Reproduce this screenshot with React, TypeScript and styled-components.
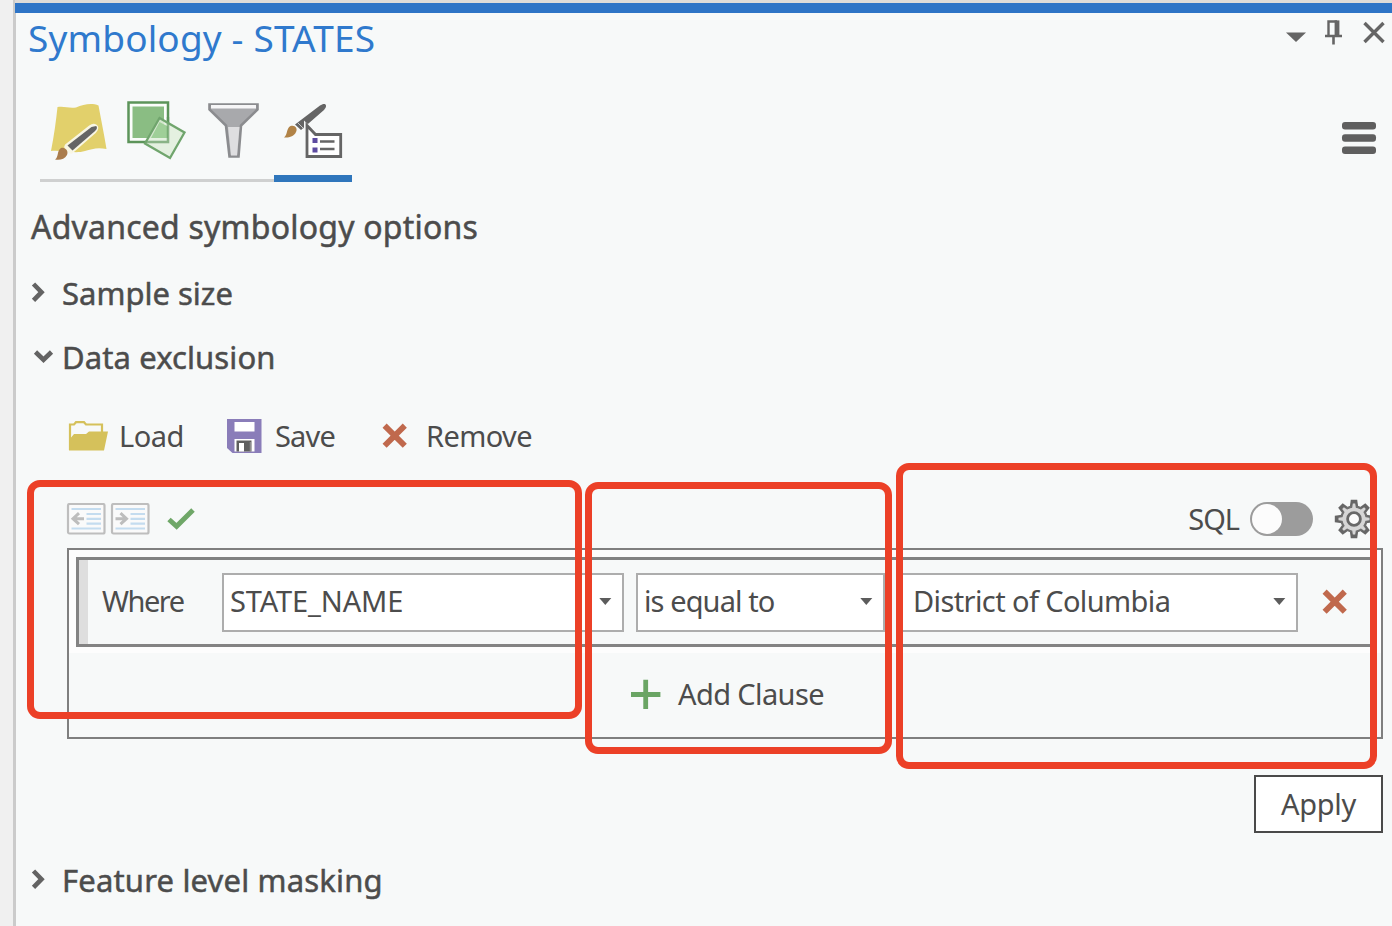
import React from 'react';
import styled, { createGlobalStyle } from 'styled-components';

const GlobalStyle = createGlobalStyle`
  * { box-sizing: border-box; }
  body { margin: 0; background: #f0f0f0; overflow: hidden; }
  svg { display: block; flex: none; }
`;

const Window = styled.div`
  width: 1392px;
  height: 926px;
  padding-left: 13px;
  background: #f0f0f0;
  font-family: 'Noto Sans', 'Open Sans', sans-serif;
  color: #4c4c4c;
  position: relative;
  overflow: hidden;
`;

const Pane = styled.section`
  height: 926px;
  border-left: 3px solid #cbcbcb;
  background: #f7f9f9;
  display: flex;
  flex-direction: column;
`;

const AccentStrip = styled.div`
  height: 13px;
  flex: none;
  margin-left: -1px;
  border-top: 3px solid #dedbd8;
  background: #2e74c6;
`;

const Label = styled.span<{ $spacing?: number }>`
  font-size: 29px;
  line-height: 40px;
  white-space: pre;
  letter-spacing: ${(p) => p.$spacing ?? 0}px;
`;

const TitleBar = styled.header`
  height: 52px;
  display: flex;
  justify-content: space-between;
  padding: 0 7px 0 12px;
`;

const Title = styled.h1`
  margin: 0;
  font-size: 37px;
  font-weight: 400;
  line-height: 50px;
  letter-spacing: 0.15px;
  color: #2f79cd;
  white-space: pre;
`;

const WindowControls = styled.div`
  display: flex;
  align-items: flex-start;
  padding-top: 5px;
`;

const TabBar = styled.nav`
  height: 118px;
  display: flex;
  justify-content: space-between;
  align-items: flex-end;
  padding: 0 15px 1px 24px;
`;

const Tabs = styled.div`
  display: flex;
`;

const Tab = styled.div<{ $active?: boolean }>`
  width: 78px;
  height: 86px;
  padding-top: 3px;
  border-bottom: ${(p) => (p.$active ? '7px solid #2f76bc' : '3px solid #cfd0d0')};
`;

const MenuButton = styled.div`
  height: 60px;
`;

const Heading = styled.h2`
  margin: 12px 0 0 15px;
  font-size: 32px;
  font-weight: 400;
  line-height: 64px;
  letter-spacing: 0.22px;
  -webkit-text-stroke: 0.5px #4c4c4c;
`;

const SectionHeader = styled.div<{ $height: number }>`
  height: ${(p) => p.$height}px;
  flex: none;
  display: flex;
  align-items: center;
  padding-left: 14px;
`;

const SectionTitle = styled.h3<{ $spacing: number }>`
  margin: 0 0 0 -1px;
  font-size: 31px;
  font-weight: 400;
  line-height: 42px;
  letter-spacing: ${(p) => p.$spacing}px;
  -webkit-text-stroke: 0.5px #4c4c4c;
`;

const Toolbar = styled.div`
  height: 101px;
  flex: none;
  display: flex;
  align-items: center;
  padding: 0 0 3px 52px;
`;

const ToolButton = styled.div<{ $width: number; $gap: number }>`
  width: ${(p) => p.$width}px;
  display: flex;
  align-items: center;
  gap: ${(p) => p.$gap}px;
`;

const BuilderTools = styled.div`
  height: 60px;
  flex: none;
  display: flex;
  align-items: center;
  padding: 2px 18px 0 50px;
`;

const CheckButton = styled.div`
  padding-left: 13px;
`;

const Spacer = styled.div`
  flex: 1;
`;

const Toggle = styled.div`
  width: 63px;
  height: 34px;
  margin: 0 21px 0 11px;
  padding: 2px;
  border-radius: 17px;
  background: #9c9c9c;
`;

const Knob = styled.div`
  width: 30px;
  height: 30px;
  border-radius: 50%;
  background: #fcfcfc;
`;

const QueryBox = styled.div`
  height: 191px;
  flex: none;
  margin: 0 9px 0 51px;
  border: 2px solid #7f7f7f;
  display: flex;
  flex-direction: column;
`;

const ClauseFrame = styled.div`
  height: 103px;
  padding: 7px 7px 6px;
  background: #fdfdfd;
`;

const Clause = styled.div`
  height: 90px;
  display: flex;
  align-items: center;
  border: 3px solid #838383;
  border-right-width: 2px;
  background: #f7f9f9;
`;

const Grip = styled.div`
  width: 9px;
  height: 100%;
  background: #dedede;
`;

const WhereCell = styled.div`
  width: 134px;
  flex: none;
  padding: 0 0 2px 14px;
`;

const Combo = styled.div<{ $width: number; $after: number }>`
  width: ${(p) => p.$width}px;
  flex: none;
  height: 59px;
  margin-right: ${(p) => p.$after}px;
  padding: 0 10px 2px 6px;
  border: 2px solid #adadad;
  background: #fff;
  display: flex;
  align-items: center;
  justify-content: space-between;
`;

const AddClause = styled.div`
  flex: 1;
  display: flex;
  align-items: center;
  gap: 17px;
  padding: 0 0 2px 562px;
`;

const Footer = styled.div`
  height: 109px;
  flex: none;
  display: flex;
  justify-content: flex-end;
  padding: 36px 9px 0 0;
`;

const ApplyButton = styled.div`
  width: 129px;
  height: 58px;
  border: 2px solid #4a4a4a;
  background: #fff;
  display: flex;
  align-items: center;
  justify-content: center;
`;

/* Annotation frames drawn over the pane. */
const Highlight = styled.div<{ $x: number; $y: number; $w: number; $h: number }>`
  position: absolute;
  left: ${(p) => p.$x}px;
  top: ${(p) => p.$y}px;
  width: ${(p) => p.$w}px;
  height: ${(p) => p.$h}px;
  border: 7px solid #ec4027;
  border-radius: 13px;
`;

const Chevron = ({ open }: { open?: boolean }) => (
  <svg width="33" height="32" viewBox="0 0 33 32" fill="none" stroke="#636363" strokeWidth="4.6">
    {open ? <path d="M5.5 11 13.5 18.7 21.5 11" /> : <path d="M3.5 7 11.5 15.2 3.5 23.4" />}
  </svg>
);

const Caret = () => (
  <svg width="13" height="8" viewBox="0 0 13 8">
    <path d="M0.3 1H12.3L6.3 8Z" fill="#5c5c5c" />
  </svg>
);

const Cross = () => (
  <svg width="26" height="26" viewBox="0 0 26 26" stroke="#c0694d" strokeWidth="5.8">
    <path d="M2.600 2.600 22.800 22.800M22.800 2.600 2.600 22.800" />
  </svg>
);

const ControlIcons = () => (
  <svg width="100" height="30" viewBox="1285 18 100 30" fill="none" stroke="#656565">
    <path d="M1286 32.5H1306L1296 42Z" fill="#656565" stroke="none" />
    <path d="M1328.5 36V21.5H1337" strokeWidth="2.4" />
    <path d="M1337 20.4V36" strokeWidth="4.8" />
    <path d="M1325 36H1342M1333.5 36V44.5" strokeWidth="2.6" />
    <path d="M1364.5 23 1383.500 42M1383.500 23 1364.500 42" strokeWidth="3.4" />
  </svg>
);

const MapBrushIcon = () => (
  <svg width="78" height="76" viewBox="40 98 78 76">
    <path d="M57.500 106C65 105 68 107.500 76 106.500C84 103 92 102 98.500 104.500C101 118 104 133 106.500 148C97 146 92 148 85 150C75 153 63 149 51 150C54 135 56 120 57.500 106Z" fill="#e2d06b" />
    <path d="M95.500 124.500C98.500 126.500 96.500 129 94.500 131.500L72 151C70 153 64 147 66 144.500L90 125.500C92 124 94 123.500 95.500 124.500Z" fill="#f8f6e4" stroke="#f8f6e4" strokeWidth="2.500" />
    <path d="M96.200 125C98 127 96 129.200 94.500 130.500L72.500 149.500L67.500 144.500L91.500 126Z" fill="#656565" />
    <path d="M61 147C65 145.500 69 150 67 154C64.500 158.500 59.500 159.500 55 158.500C59 156 56.500 150 61 147Z" fill="#aa7c4c" />
  </svg>
);

const LayersIcon = () => (
  <svg width="78" height="76" viewBox="118 98 78 76">
    <rect x="128.500" y="101.500" width="39.500" height="39.500" fill="#fbfdfb" stroke="#5c945a" strokeWidth="2.500" />
    <rect x="132.500" y="105.500" width="31.500" height="31.500" fill="#8abd83" />
    <path d="M159.500 117 184.500 131.500 170 157 145 142.500Z" fill="#e0efdc" fillOpacity=".85" />
    <path d="M159.500 121 168 125.500V137H151Z" fill="#9fcf98" />
    <path d="M168 116V141H145" fill="none" stroke="#5c945a" strokeWidth="2.500" opacity=".6" />
    <path d="M159.500 117 184.500 131.500 170 157 145 142.500Z" fill="none" stroke="#70a56d" strokeWidth="2.300" />
  </svg>
);

const FunnelIcon = () => (
  <svg width="78" height="76" viewBox="196 98 78 76">
    <path d="M209.500 103.500H257.500V108.500L241 124.500L238.500 155.500H229.500L226 124.500L209.500 108.500Z" fill="#a8a9ac" stroke="#8b8c8f" strokeWidth="2.600" />
    <path d="M228 126H239.500L237 154.500H231Z" fill="#dedee0" />
    <path d="M211 105.800H256" stroke="#f6f6f7" strokeWidth="3.400" />
  </svg>
);

const LegendBrushIcon = () => (
  <svg width="78" height="76" viewBox="274 98 78 76">
    <path d="M325.500 103.500C327 105.500 325 107.500 324 109L301 129L295 123.500L320 104.500C322 103.500 324 102.500 325.500 103.500Z" fill="#656565" />
    <path d="M297 121 303.500 127.500" stroke="#c9caca" strokeWidth="1" />
    <path d="M290.500 125C295 123.500 298 127.500 296 131C294 135.500 289 137 284 136.500C288 133.500 286 127.500 290.500 125Z" fill="#b18347" />
    <path d="M304 119.500 315.500 130.500H344V158.500H304Z" fill="#f7f9f9" />
    <path d="M307 124.500 315.500 133.500H340.700V155.500H307Z" fill="#fff" stroke="#656565" strokeWidth="2.800" />
    <path d="M312.500 137h5v5h-5zM312.500 146.500h5v5h-5z" fill="#5d4ba0" />
    <path d="M320 140.500H334.500M320 148H334.500" stroke="#656565" strokeWidth="2.500" />
  </svg>
);

const BurgerIcon = () => (
  <svg width="36" height="34" viewBox="0 0 36 34" fill="#5f5f5f">
    <rect x="1" y="0" width="34" height="7.500" rx="3" />
    <rect x="1" y="12.300" width="34" height="7.500" rx="3" />
    <rect x="1" y="24.500" width="34" height="7.500" rx="3" />
  </svg>
);

const FolderIcon = () => (
  <svg width="40" height="32" viewBox="0 0 40 32">
    <path d="M2 30V4.500H6L8 2.200H16L18 4.500H34V13" fill="none" stroke="#d5c15b" strokeWidth="2.200" />
    <path d="M1 30.500V20L6 14H18L21 11.500H40L36 30.500Z" fill="#d5c15b" />
  </svg>
);

const FloppyIcon = () => (
  <svg width="36" height="34" viewBox="0 0 36 34">
    <path d="M1 0H35.500V34H6.500L1 29Z" fill="#8a7db9" />
    <rect x="8.500" y="3" width="20" height="9.500" fill="#fff" />
    <rect x="8.500" y="20" width="20" height="12.500" fill="#fff" />
    <path d="M10.500 21.500H25.500V32.500H10.500Z" fill="#5e5e5e" />
    <path d="M13 24H18V32.500H13Z" fill="#fff" />
    <path d="M24.300 23V32.500" stroke="#999" strokeWidth="1" />
  </svg>
);

const IndentIcon = ({ right }: { right?: boolean }) => (
  <svg width="44" height="32" viewBox="0 0 44 32" fill="none">
    <rect x="2" y="1" width="36.500" height="29.500" rx="1.500" fill="#fafafa" stroke="#bebebe" strokeWidth="2.200" />
    <path d="M5.500 6H35M20.500 11H35M20.500 15.800H35M20.500 20.600H35M5.500 25.500H35" stroke="#c4dcef" strokeWidth="2.200" />
    <path d={right ? 'M5.500 15.700H16M10.500 10.200 16.500 15.700 10.500 21.200' : 'M7 15.700H18M13 10.200 7 15.700 13 21.200'} stroke="#bdbdbd" strokeWidth="3" />
  </svg>
);

const CheckIcon = () => (
  <svg width="28" height="24" viewBox="0 0 28 24" fill="none" stroke="#6fa768" strokeWidth="5">
    <path d="M2 12.500 9.600 19.300 26 3" />
  </svg>
);

const teeth = [0, 45, 90, 135, 180, 225, 270, 315];
const GearIcon = () => (
  <svg width="40" height="40" viewBox="-20 -20 40 40">
    {teeth.map((a) => (
      <path key={a} transform={`rotate(${a})`} d="M-4.200 -12 -3.200 -19.200H3.200L4.200 -12Z" fill="#666" />
    ))}
    <circle r="12.600" fill="#d6d6d6" stroke="#707070" strokeWidth="2.200" />
    {teeth.map((a) => (
      <path key={a} transform={`rotate(${a})`} d="M-2 -10 -1.200 -15.500H1.200L2 -10Z" fill="#d6d6d6" />
    ))}
    <circle r="6.400" fill="#fbfbfb" stroke="#686868" strokeWidth="2.800" />
  </svg>
);

const PlusIcon = () => (
  <svg width="30" height="30" viewBox="0 0 30 30" stroke="#6aa564" strokeWidth="4.800">
    <path d="M0 15.500H29.400M14.700 0.800V30" />
  </svg>
);

export default function App() {
  return (
    <Window>
      <GlobalStyle />
      <Pane>
        <AccentStrip />
        <TitleBar>
          <Title>Symbology - STATES</Title>
          <WindowControls><ControlIcons /></WindowControls>
        </TitleBar>
        <TabBar>
          <Tabs>
            <Tab><MapBrushIcon /></Tab>
            <Tab><LayersIcon /></Tab>
            <Tab><FunnelIcon /></Tab>
            <Tab $active><LegendBrushIcon /></Tab>
          </Tabs>
          <MenuButton><BurgerIcon /></MenuButton>
        </TabBar>
        <Heading>Advanced symbology options</Heading>
        <SectionHeader $height={67}>
          <Chevron />
          <SectionTitle $spacing={0}>Sample size</SectionTitle>
        </SectionHeader>
        <SectionHeader $height={61}>
          <Chevron open />
          <SectionTitle $spacing={0.1}>Data exclusion</SectionTitle>
        </SectionHeader>
        <Toolbar>
          <ToolButton $width={158} $gap={11}><FolderIcon /><Label $spacing={-0.5}>Load</Label></ToolButton>
          <ToolButton $width={156} $gap={13}><FloppyIcon /><Label $spacing={-0.8}>Save</Label></ToolButton>
          <ToolButton $width={160} $gap={18}><Cross /><Label $spacing={-0.6}>Remove</Label></ToolButton>
        </Toolbar>
        <BuilderTools>
          <IndentIcon />
          <IndentIcon right />
          <CheckButton><CheckIcon /></CheckButton>
          <Spacer />
          <Label $spacing={-1}>SQL</Label>
          <Toggle><Knob /></Toggle>
          <GearIcon />
        </BuilderTools>
        <QueryBox>
          <ClauseFrame>
            <Clause>
              <Grip />
              <WhereCell><Label $spacing={-1.5}>Where</Label></WhereCell>
              <Combo $width={402} $after={12}><Label $spacing={-0.15}>STATE_NAME</Label><Caret /></Combo>
              <Combo $width={249} $after={13}><Label $spacing={-0.9}>is equal to</Label><Caret /></Combo>
              <Combo $width={400} $after={24}><Label $spacing={-0.6}> District of Columbia</Label><Caret /></Combo>
              <Cross />
            </Clause>
          </ClauseFrame>
          <AddClause><PlusIcon /><Label $spacing={-0.6}>Add Clause</Label></AddClause>
        </QueryBox>
        <Footer>
          <ApplyButton><Label $spacing={-0.3}>Apply</Label></ApplyButton>
        </Footer>
        <SectionHeader $height={64}>
          <Chevron />
          <SectionTitle $spacing={0.17}>Feature level masking</SectionTitle>
        </SectionHeader>
      </Pane>
      <Highlight $x={27} $y={480} $w={555} $h={239} />
      <Highlight $x={585} $y={482} $w={307} $h={272} />
      <Highlight $x={896} $y={463} $w={481} $h={306} />
    </Window>
  );
}
